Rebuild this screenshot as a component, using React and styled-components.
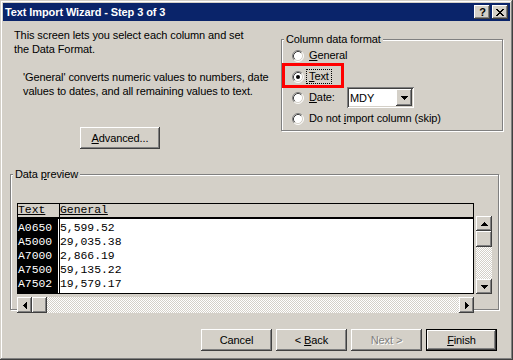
import React from 'react';
import styled, { createGlobalStyle, css } from 'styled-components';

const FACE = '#D4D0C8';
const UI_FONT = '"Liberation Sans", Arial, sans-serif';
const MONO_FONT = '"Liberation Mono", "Courier New", monospace';

const GlobalStyle = createGlobalStyle`
  html, body { margin: 0; padding: 0; background: ${FACE}; }
  body { font-family: ${UI_FONT}; font-size: 11px; color: #000; }
  *, *::before, *::after { box-sizing: border-box; }
`;

const raised = css`
  background: ${FACE};
  box-shadow: inset -1px -1px #404040, inset 1px 1px #ffffff,
    inset -2px -2px #808080, inset 2px 2px ${FACE};
`;

const sunken = css`
  box-shadow: inset 1px 1px #808080, inset -1px -1px #ffffff,
    inset 2px 2px #404040, inset -2px -2px ${FACE};
`;

const dither = css`
  background: repeating-conic-gradient(#ffffff 0 25%, ${FACE} 0 50%) 0 0 / 2px 2px;
`;

const Window = styled.div`
  width: 513px;
  height: 360px;
  padding: 3px;
  background: ${FACE};
  box-shadow: inset -1px -1px #404040, inset 1px 1px ${FACE},
    inset -2px -2px #808080, inset 2px 2px #ffffff;
  display: flex;
  flex-direction: column;
  font-family: ${UI_FONT};
  font-size: 11px;
  letter-spacing: -0.1px;
`;

const TitleBar = styled.div`
  height: 18px;
  background: #0a246a;
  display: flex;
  align-items: center;
  padding: 0 2px;
`;

const Title = styled.div`
  flex: 1;
  color: #ffffff;
  font-weight: bold;
  font-size: 11px;
  line-height: 18px;
  white-space: nowrap;
`;

const CaptionButtons = styled.div`
  display: flex;
  gap: 2px;
`;

const CaptionButton = styled.div`
  ${raised};
  width: 16px;
  height: 14px;
  display: flex;
  align-items: center;
  justify-content: center;
`;

const HelpGlyph = styled.span`
  font-family: ${UI_FONT};
  font-weight: bold;
  font-size: 11px;
  line-height: 11px;
  padding-left: 1px;
`;

const IconSvg = styled.svg`
  display: block;
`;

const PixelIcon = ({ rows, color = '#000' }) => {
  const w = rows[0].length;
  const h = rows.length;
  const rects = [];
  rows.forEach((r, y) => {
    for (let x = 0; x < w; x++) {
      if (r[x] === 'x') rects.push(<rect key={`${x}-${y}`} x={x} y={y} width={1} height={1} />);
    }
  });
  return (
    <IconSvg width={w} height={h} viewBox={`0 0 ${w} ${h}`} fill={color} shapeRendering="crispEdges">
      {rects}
    </IconSvg>
  );
};

const CLOSE = ['xx....xx', '.xx..xx.', '..xxxx..', '...xx...', '..xxxx..', '.xx..xx.', 'xx....xx'];
const UP = ['...x...', '..xxx..', '.xxxxx.', 'xxxxxxx'];
const DOWN = ['xxxxxxx', '.xxxxx.', '..xxx..', '...x...'];
const LEFT = ['...x', '..xx', '.xxx', 'xxxx', '.xxx', '..xx', '...x'];
const RIGHT = ['x...', 'xx..', 'xxx.', 'xxxx', 'xxx.', 'xx..', 'x...'];

const Body = styled.div`
  flex: 1;
  display: flex;
  flex-direction: column;
`;

const TopSection = styled.div`
  display: flex;
  height: 153px;
`;

const Intro = styled.div`
  width: 278px;
  padding: 7px 0 0 11px;
`;

const Para = styled.p`
  margin: ${(p) => p.$gap || 0}px 0 0 0;
  padding-left: ${(p) => (p.$indent ? 9 : 0)}px;
  line-height: 14px;
  white-space: nowrap;
`;

const Button = styled.div`
  ${raised};
  width: ${(p) => p.$width || 71}px;
  height: 22px;
  margin: ${(p) => p.$margin || 0};
  display: flex;
  align-items: center;
  justify-content: center;
  font-size: 11px;
  line-height: 13px;
  white-space: nowrap;
  ${(p) =>
    p.$default &&
    css`
      box-shadow: inset 0 0 0 1px #000, inset -2px -2px #404040, inset 2px 2px #ffffff,
        inset -3px -3px #808080, inset 3px 3px ${FACE};
    `}
  ${(p) =>
    p.$disabled &&
    css`
      color: #808080;
      text-shadow: 1px 1px #ffffff;
    `}
`;

const GroupBox = styled.div`
  border: 1px solid #808080;
  box-shadow: inset 1px 1px #ffffff, 1px 1px #ffffff;
  width: ${(p) => p.$width}px;
  height: ${(p) => p.$height}px;
  margin: ${(p) => p.$margin || 0};
  padding-left: ${(p) => p.$padLeft || 0}px;
`;

const Legend = styled.div`
  width: fit-content;
  margin: -7px 0 -1px ${(p) => p.$offset}px;
  padding: 0 2px;
  background: ${FACE};
  line-height: 13px;
  white-space: nowrap;
`;

const RadioRow = styled.div`
  position: relative;
  height: 21px;
  display: flex;
  align-items: center;
`;

const RadioLabel = styled.span`
  line-height: 13px;
  white-space: nowrap;
  width: ${(p) => (p.$width ? `${p.$width}px` : 'auto')};
  ${(p) =>
    p.$focused &&
    css`
      outline: 1px dotted #000;
      outline-offset: 0;
      padding: 0 2px;
      margin-left: -2px;
    `}
`;

const RadioSvg = styled.svg`
  display: block;
  flex: none;
  margin-right: 5px;
`;

const Radio = ({ checked }) => (
  <RadioSvg width="12" height="12" viewBox="0 0 12 12">
    <circle cx="6" cy="6" r="5" fill="#fff" />
    <path d="M2.11 9.89 A5.5 5.5 0 0 1 9.89 2.11" stroke="#808080" fill="none" />
    <path d="M9.89 2.11 A5.5 5.5 0 0 1 2.11 9.89" stroke="#fff" fill="none" />
    <path d="M2.82 9.18 A4.5 4.5 0 0 1 9.18 2.82" stroke="#404040" fill="none" />
    <path d="M9.18 2.82 A4.5 4.5 0 0 1 2.82 9.18" stroke={FACE} fill="none" />
    {checked && <circle cx="6" cy="6" r="2" fill="#000" />}
  </RadioSvg>
);

const Highlight = styled.span`
  position: absolute;
  left: -10px;
  top: -3px;
  width: 62px;
  height: 25px;
  border: 3px solid #ff0000;
  pointer-events: none;
`;

const Combo = styled.div`
  ${sunken};
  background: #ffffff;
  width: 67px;
  height: 21px;
  padding: 2px;
  display: flex;
  align-items: center;
`;

const ComboText = styled.span`
  flex: 1;
  padding-left: 1px;
  font-size: 11px;
`;

const ArrowButton = styled.div`
  ${raised};
  flex: none;
  width: ${(p) => p.$w}px;
  height: ${(p) => p.$h}px;
  display: flex;
  align-items: center;
  justify-content: center;
`;

const PreviewArea = styled.div`
  margin-top: 23px;
  display: grid;
  grid-template-columns: 457px 16px;
  grid-template-rows: 91px 16px;
  column-gap: 2px;
  row-gap: 3px;
`;

const Table = styled.div`
  border: 1px solid #000;
  background: #ffffff;
  display: flex;
  flex-direction: column;
  font-family: ${MONO_FONT};
  font-size: 11.4px;
  letter-spacing: 0;
`;

const HeaderRow = styled.div`
  height: 15px;
  background: ${FACE};
  border-bottom: 2px solid #000;
  display: flex;
`;

const HeaderCell = styled.div`
  width: ${(p) => (p.$w ? `${p.$w}px` : 'auto')};
  flex: ${(p) => (p.$w ? 'none' : '1')};
  border-left: ${(p) => (p.$sep ? '1px solid #000' : 'none')};
  line-height: 13px;
  text-decoration: underline;
  white-space: nowrap;
`;

const DataBody = styled.div`
  flex: 1;
  display: flex;
`;

const DataColumn = styled.div`
  width: ${(p) => (p.$w ? `${p.$w}px` : 'auto')};
  flex: ${(p) => (p.$w ? 'none' : '1')};
  padding-top: 2px;
  background: ${(p) => (p.$dark ? '#000' : '#fff')};
  color: ${(p) => (p.$dark ? '#fff' : '#000')};
  box-shadow: ${(p) => (p.$dark ? 'inset -1px 0 #fff' : 'none')};
  border-left: ${(p) => (p.$sep ? '1px solid #000' : 'none')};
`;

const DataCell = styled.div`
  height: 14px;
  line-height: 14px;
  white-space: nowrap;
`;

const VScroll = styled.div`
  grid-column: 2;
  grid-row: 1;
  margin-top: 13px;
  height: 78px;
  display: flex;
  flex-direction: column;
`;

const HScroll = styled.div`
  grid-column: 1;
  grid-row: 2;
  display: flex;
`;

const Thumb = styled.div`
  ${raised};
  flex: none;
  width: ${(p) => p.$w}px;
  height: ${(p) => p.$h}px;
`;

const Track = styled.div`
  ${dither};
  flex: 1;
`;

const ButtonRow = styled.div`
  margin-top: 19px;
  display: flex;
  justify-content: flex-end;
  gap: 4px;
  padding-right: 13px;
`;

const columns = [
  { name: 'Text', values: ['A0650', 'A5000', 'A7000', 'A7500', 'A7502'] },
  { name: 'General', values: ['5,599.52', '29,035.38', '2,866.19', '59,135.22', '19,579.17'] },
];

export default function App() {
  return (
    <>
      <GlobalStyle />
      <Window>
        <TitleBar>
          <Title>Text Import Wizard - Step 3 of 3</Title>
          <CaptionButtons>
            <CaptionButton>
              <HelpGlyph>?</HelpGlyph>
            </CaptionButton>
            <CaptionButton>
              <PixelIcon rows={CLOSE} />
            </CaptionButton>
          </CaptionButtons>
        </TitleBar>
        <Body>
          <TopSection>
            <Intro>
              <Para>
                This screen lets you select each column and set
                <br />
                the Data Format.
              </Para>
              <Para $indent $gap={14}>
                'General' converts numeric values to numbers, date
                <br />
                values to dates, and all remaining values to text.
              </Para>
              <Button $width={80} $margin="29px 0 0 66px">
                <span>
                  <u>A</u>dvanced...
                </span>
              </Button>
            </Intro>
            <GroupBox $width={222} $height={92} $margin="18px 0 0 0" $padLeft={10}>
              <Legend $offset={-8}>Column data format</Legend>
              <RadioRow>
                <Radio />
                <RadioLabel>
                  <u>G</u>eneral
                </RadioLabel>
              </RadioRow>
              <RadioRow>
                <Radio checked />
                <RadioLabel $focused>
                  <u>T</u>ext
                </RadioLabel>
                <Highlight />
              </RadioRow>
              <RadioRow>
                <Radio />
                <RadioLabel $width={38}>
                  <u>D</u>ate:
                </RadioLabel>
                <Combo>
                  <ComboText>MDY</ComboText>
                  <ArrowButton $w={16} $h={17}>
                    <PixelIcon rows={DOWN} />
                  </ArrowButton>
                </Combo>
              </RadioRow>
              <RadioRow>
                <Radio />
                <RadioLabel>
                  Do not <u>i</u>mport column (skip)
                </RadioLabel>
              </RadioRow>
            </GroupBox>
          </TopSection>
          <GroupBox $width={489} $height={136} $margin="0 0 0 7px" $padLeft={6}>
            <Legend $offset={-4}>
              Data <u>p</u>review
            </Legend>
            <PreviewArea>
              <Table>
                <HeaderRow>
                  <HeaderCell $w={41}>{columns[0].name}</HeaderCell>
                  <HeaderCell $sep>{columns[1].name}</HeaderCell>
                </HeaderRow>
                <DataBody>
                  <DataColumn $w={41} $dark>
                    {columns[0].values.map((v) => (
                      <DataCell key={v}>{v}</DataCell>
                    ))}
                  </DataColumn>
                  <DataColumn $sep>
                    {columns[1].values.map((v) => (
                      <DataCell key={v}>{v}</DataCell>
                    ))}
                  </DataColumn>
                </DataBody>
              </Table>
              <VScroll>
                <ArrowButton $w={16} $h={15}>
                  <PixelIcon rows={UP} />
                </ArrowButton>
                <Thumb $w={16} $h={16} />
                <Track />
                <ArrowButton $w={16} $h={15}>
                  <PixelIcon rows={DOWN} />
                </ArrowButton>
              </VScroll>
              <HScroll>
                <ArrowButton $w={15} $h={16}>
                  <PixelIcon rows={LEFT} />
                </ArrowButton>
                <Thumb $w={15} $h={16} />
                <Track />
                <ArrowButton $w={15} $h={16}>
                  <PixelIcon rows={RIGHT} />
                </ArrowButton>
              </HScroll>
            </PreviewArea>
          </GroupBox>
          <ButtonRow>
            <Button>Cancel</Button>
            <Button>
              <span>
                &lt; <u>B</u>ack
              </span>
            </Button>
            <Button $disabled>Next &gt;</Button>
            <Button $default>
              <span>
                <u>F</u>inish
              </span>
            </Button>
          </ButtonRow>
        </Body>
      </Window>
    </>
  );
}
